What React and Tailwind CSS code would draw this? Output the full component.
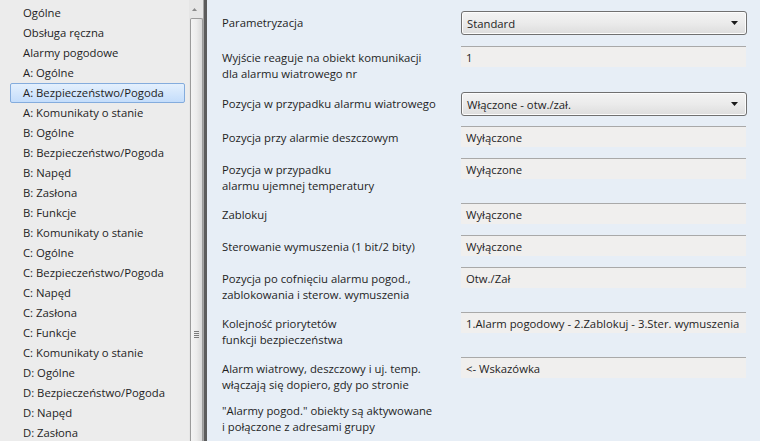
import React from "react";

const menu = [
  "Ogólne",
  "Obsługa ręczna",
  "Alarmy pogodowe",
  "A: Ogólne",
  "A: Bezpieczeństwo/Pogoda",
  "A: Komunikaty o stanie",
  "B: Ogólne",
  "B: Bezpieczeństwo/Pogoda",
  "B: Napęd",
  "B: Zasłona",
  "B: Funkcje",
  "B: Komunikaty o stanie",
  "C: Ogólne",
  "C: Bezpieczeństwo/Pogoda",
  "C: Napęd",
  "C: Zasłona",
  "C: Funkcje",
  "C: Komunikaty o stanie",
  "D: Ogólne",
  "D: Bezpieczeństwo/Pogoda",
  "D: Napęd",
  "D: Zasłona",
];

const rows = [
  { label: ["Parametryzacja"], value: "Standard", type: "select", h: "h-[35px]" },
  { label: ["Wyjście reaguje na obiekt komunikacji", "dla alarmu wiatrowego nr"], value: "1", type: "field", h: "h-[46px]" },
  { label: ["Pozycja w przypadku alarmu wiatrowego"], value: "Włączone - otw./zał.", type: "select", h: "h-[34px]" },
  { label: ["Pozycja przy alarmie deszczowym"], value: "Wyłączone", type: "field", h: "h-[32px]" },
  { label: ["Pozycja w przypadku", "alarmu ujemnej temperatury"], value: "Wyłączone", type: "field", h: "h-[45px]" },
  { label: ["Zablokuj"], value: "Wyłączone", type: "field", h: "h-[32px]" },
  { label: ["Sterowanie wymuszenia (1 bit/2 bity)"], value: "Wyłączone", type: "field", h: "h-[32px]" },
  { label: ["Pozycja po cofnięciu alarmu pogod.,", "zablokowania i sterow. wymuszenia"], value: "Otw./Zał", type: "field", h: "h-[45px]" },
  { label: ["Kolejność priorytetów", "funkcji bezpieczeństwa"], value: "1.Alarm pogodowy - 2.Zablokuj - 3.Ster. wymuszenia", type: "field", h: "h-[45px]" },
  { label: ["Alarm wiatrowy, deszczowy i uj. temp.", "włączają się dopiero, gdy po stronie"], value: "<- Wskazówka", type: "field", h: "h-[42px]" },
  { label: ["\"Alarmy pogod.\" obiekty są aktywowane", "i połączone z adresami grupy"], value: null, type: "none", h: "h-[45px]" },
];

function Select({ value }) {
  return (
    <div className="w-[286px] h-[24px] rounded-[3px] border border-[#707070] bg-gradient-to-b from-[#f3f3f3] via-[#ebebeb] to-[#dddddd] flex items-center pl-[5px] pr-[8px] shadow-[inset_0_0_0_1px_#fcfcfc]">
      <span className="flex-1 leading-[16px] pt-[1px]">{value}</span>
      <svg width="7" height="4" viewBox="0 0 7 4">
        <path d="M0 0 H7 L3.5 4 Z" fill="#1a1a1a" />
      </svg>
    </div>
  );
}

function Field({ value }) {
  return (
    <div className="w-[285px] h-[21px] bg-[#f0efee] border-t border-[#a9a9a9] flex items-center pl-[5px] pt-[1px] leading-[16px] whitespace-nowrap overflow-hidden">
      {value}
    </div>
  );
}

export default function App() {
  return (
    <div
      className="w-[760px] h-[441px] flex overflow-hidden text-[11.3px] text-[#1e1e1e]"
      style={{ fontFamily: '"Segoe UI", "Open Sans", "Noto Sans", sans-serif' }}
    >
      {/* Left navigation */}
      <div className="w-[189px] bg-[#ececec] pt-[3px] pl-[10px] pr-[4px]">
        {menu.map((m, i) => {
          const sel = i === 4;
          return (
            <div
              key={i}
              className={
                "h-[20px] flex items-center whitespace-nowrap leading-[16px] " +
                (sel
                  ? "rounded-[2px] border border-[#84acdd] bg-gradient-to-b from-[#e4f0fd] to-[#c4ddfb] pl-[12px]"
                  : "pl-[13px]")
              }
            >
              {m}
            </div>
          );
        })}
      </div>

      {/* Scrollbar */}
      <div className="w-[14px] bg-[#e6e6e6] flex flex-col items-center">
        <div className="h-[18px] flex items-center justify-center pr-[4px]">
          <svg width="5" height="3" viewBox="0 0 5 3">
            <path d="M0 3 L2.5 0 L5 3 Z" fill="#8a8a8a" />
          </svg>
        </div>
        <div className="relative w-[13px] flex-1 rounded-t-[2px] border border-[#9b9b9b] border-b-0 bg-gradient-to-r from-[#f4f4f4] via-[#ececec] to-[#d9d9d9]">
          <div className="absolute left-[3px] top-[312px] flex flex-col gap-[1px]">
            <div className="w-[5px] h-[1px] bg-[#7a7a7a]" />
            <div className="w-[5px] h-[1px] bg-[#7a7a7a]" />
            <div className="w-[5px] h-[1px] bg-[#7a7a7a]" />
            <div className="w-[5px] h-[1px] bg-[#7a7a7a]" />
          </div>
        </div>
      </div>

      {/* Divider */}
      <div className="w-[4px] bg-[#5c5c5c] border-l border-[#a5a5a5]" />

      {/* Right panel */}
      <div className="flex-1 bg-[#e7eef6] pt-[11px] pl-[15px]">
        {rows.map((r, i) => (
          <div key={i} className={"flex " + r.h}>
            <div className="w-[239px] pt-[4px] leading-[16px] whitespace-nowrap">
              {r.label.map((l, j) => (
                <div key={j}>{l}</div>
              ))}
            </div>
            <div>
              {r.type === "select" && <Select value={r.value} />}
              {r.type === "field" && <Field value={r.value} />}
            </div>
          </div>
        ))}
      </div>
    </div>
  );
}
